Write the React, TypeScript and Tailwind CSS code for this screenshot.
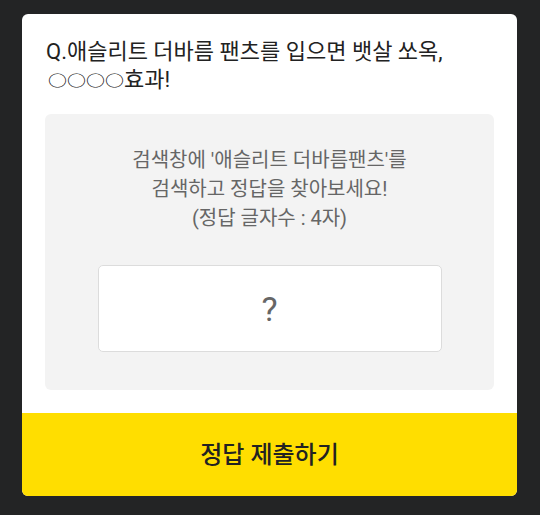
export default function App() {
  return (
    <div
      className="min-h-[515px] w-full bg-[#232425] px-[22px] pt-[14px] pb-[20px]"
      style={{ fontFamily: 'Roboto, "Noto Sans CJK KR", sans-serif' }}
    >
      <div className="w-[495px] overflow-hidden rounded-[6px] bg-white">
        <div className="px-[23px] pt-[24px] pb-[23px]">
          <h2 className="pl-[1px] text-[22px] leading-[28px] font-normal text-[#222]">
            Q.애슬리트 더바름 팬츠를 입으면 뱃살 쏘옥,
            <br />
            <span className="inline-block scale-y-[0.8] pl-[2px] text-[19px] font-medium">○○○○</span>효과!
          </h2>

          {/* hint box */}
          <div className="mt-[19px] rounded-[6px] bg-[#f3f3f3] pt-[32px] pb-[38px]">
            <p className="text-center text-[20px] leading-[29px] text-[#666]">
              검색창에 '애슬리트 더바름팬츠'를
              <br />
              검색하고 정답을 찾아보세요!
              <br />
              (정답 글자수 : 4자)
            </p>
            <div className="mx-auto mt-[32px] flex h-[87px] w-[344px] items-center justify-center rounded-[5px] border border-[#dcdcdc] bg-white">
              <span className="text-[34px] leading-none text-[#666]">?</span>
            </div>
          </div>
        </div>

        <button className="flex h-[83px] w-full items-center justify-center bg-[#ffde00] text-[24px] font-medium text-[#222]">
          정답 제출하기
        </button>
      </div>
    </div>
  );
}
